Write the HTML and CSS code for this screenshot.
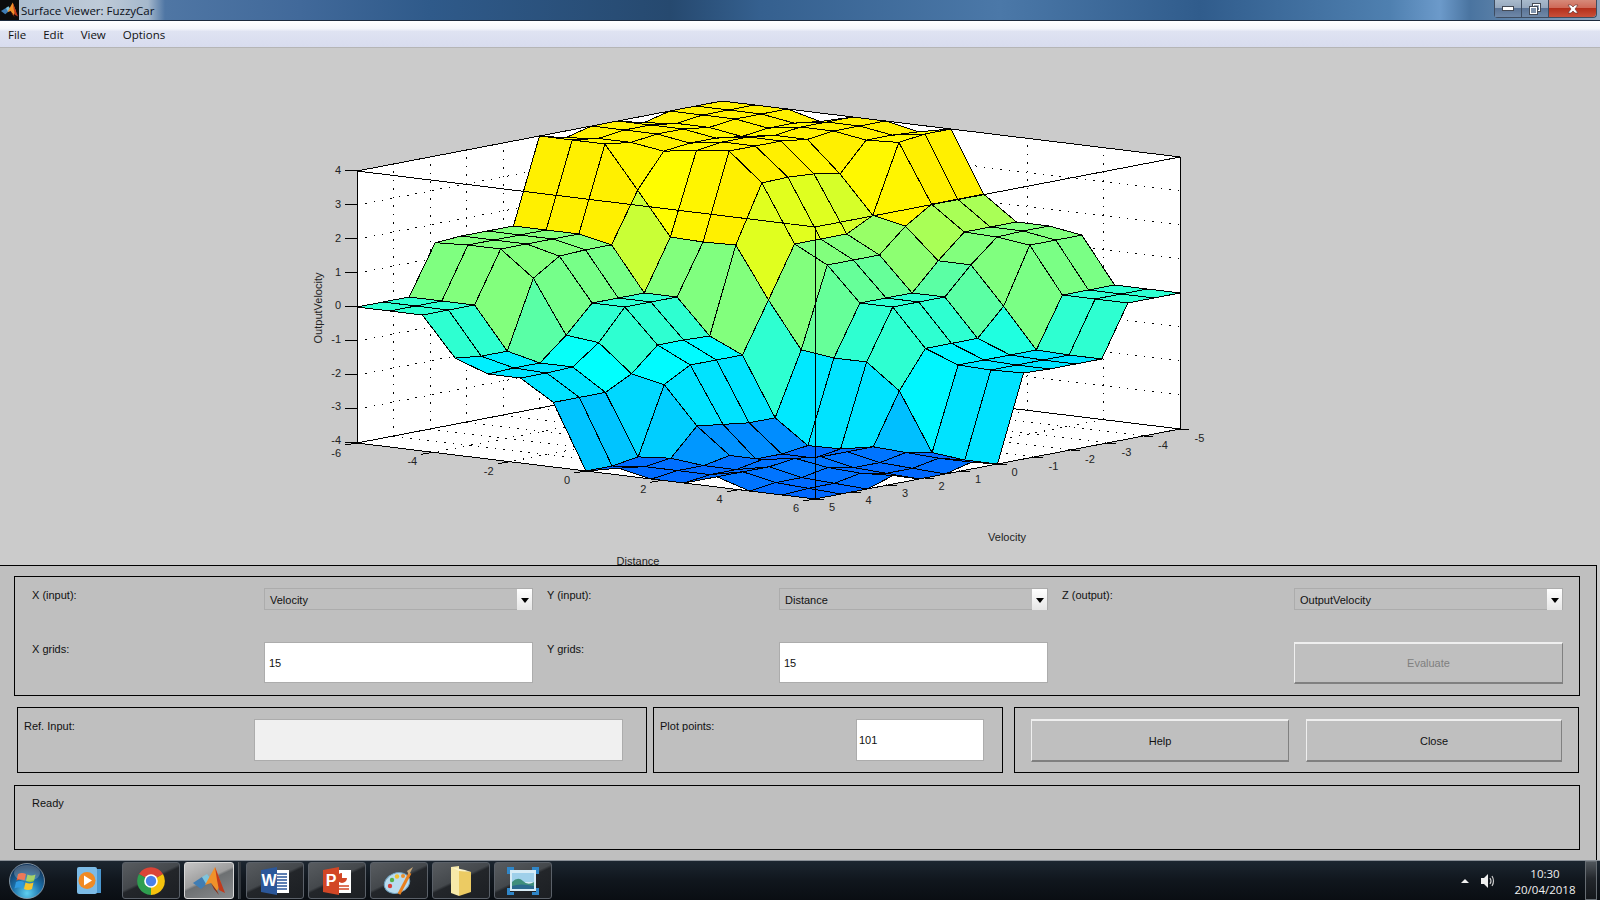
FILE: index.html
```html
<!DOCTYPE html>
<html>
<head>
    <title>Surface Viewer: FuzzyCar</title>
    <link rel="stylesheet" href="styles.css">
</head>
<body>
    <svg class="defs" width="0" height="0">
        <symbol id="matlab-logo" viewBox="0 0 32 30">
            <polygon points="0,17 9,11 15,17 8,23" fill="#3f7db4"/>
            <polygon points="9,11 14,8 18,13 13,18" fill="#7fc4dc"/>
            <polygon points="12,19 22,1 28,17 24,25 18,17" fill="#f0922a"/>
            <polygon points="22,1 32,27 26,24 24,14" fill="#c23a1c"/>
            <polygon points="18,17 24,25 26,29 21,23" fill="#8c2a10"/>
        </symbol>
    </svg>

    <div class="titlebar">
        <div class="title-icon"><svg width="17" height="16"><use href="#matlab-logo"/></svg></div>
        <span class="title-text">Surface Viewer: FuzzyCar</span>
        <div class="win-buttons">
            <div class="win-btn">
                <svg width="12" height="6"><rect x="0.5" y="0.5" width="11" height="4" fill="#fff" stroke="#444a55"/></svg>
            </div>
            <div class="win-btn">
                <svg width="12" height="12">
                    <rect x="3.5" y="0.5" width="8" height="8" fill="none" stroke="#444a55"/>
                    <rect x="4.5" y="1.5" width="6" height="6" fill="none" stroke="#fff"/>
                    <rect x="0.5" y="3.5" width="8" height="8" fill="#7f93ad" stroke="#444a55"/>
                    <rect x="1.5" y="4.5" width="6" height="6" fill="none" stroke="#fff"/>
                </svg>
            </div>
            <div class="win-btn win-close">
                <svg width="12" height="10"><path d="M1 1h3l2 2 2-2h3L8 5l3 4H8L6 7 4 9H1l3-4z" fill="#fff" stroke="#5a2a2a" stroke-width="0.6"/></svg>
            </div>
        </div>
    </div>

    <div class="menubar">
        <span class="menu-item">File</span>
        <span class="menu-item">Edit</span>
        <span class="menu-item">View</span>
        <span class="menu-item">Options</span>
    </div>

    <div class="plot">
        <svg id="surface" width="1600" height="517" viewBox="0 48 1600 517" shape-rendering="crispEdges"></svg>
    </div>

    <div class="panel">
        <div class="box box-axes">
            <span class="lbl">X (input):</span>
            <div class="select"><span>Velocity</span><i class="arrow"></i></div>
            <span class="lbl">Y (input):</span>
            <div class="select"><span>Distance</span><i class="arrow"></i></div>
            <span class="lbl">Z (output):</span>
            <div class="select"><span>OutputVelocity</span><i class="arrow"></i></div>

            <span class="lbl">X grids:</span>
            <div class="edit">15</div>
            <span class="lbl">Y grids:</span>
            <div class="edit">15</div>
            <span class="lbl"></span>
            <button class="btn btn-disabled">Evaluate</button>
        </div>

        <div class="row-mid">
            <div class="box box-ref">
                <span class="lbl">Ref. Input:</span>
                <div class="edit edit-off"></div>
            </div>
            <div class="box box-points">
                <span class="lbl">Plot points:</span>
                <div class="edit edit-tight">101</div>
            </div>
            <div class="box box-actions">
                <button class="btn btn-help">Help</button>
                <button class="btn btn-close">Close</button>
            </div>
        </div>

        <div class="box box-status">
            <span class="lbl">Ready</span>
        </div>
    </div>

    <div class="taskbar">
        <div class="orb">
            <svg width="36" height="36" viewBox="0 0 36 36">
                <defs>
                    <radialGradient id="orb-fill" cx="50%" cy="85%" r="75%">
                        <stop offset="0" stop-color="#5fd0f0"/>
                        <stop offset="0.55" stop-color="#1b6fa8"/>
                        <stop offset="1" stop-color="#12365c"/>
                    </radialGradient>
                </defs>
                <circle cx="18" cy="18" r="17.5" fill="url(#orb-fill)" stroke="#9aa8b4" stroke-width="0.8"/>
                <path d="M9 11q4-2 8 0l-1.500 6.500q-4-2-8 0z" fill="#e8542a"/>
                <path d="M18.500 11.500q4 2 8 0l-1.500 6.500q-4 2-8 0z" fill="#8cc63f"/>
                <path d="M7 19q4-2 8 0l-1.500 6.500q-4-2-8 0z" fill="#2f9ae0"/>
                <path d="M16.500 19.500q4 2 8 0l-1.500 6.500q-4 2-8 0z" fill="#f7c52b"/>
                <ellipse cx="18" cy="10" rx="13" ry="8" fill="#fff" opacity="0.22"/>
            </svg>
        </div>

        <div class="task task-plain">
            <svg width="26" height="30" viewBox="0 0 26 30">
                <rect x="6" y="3" width="19" height="24" fill="#4a97cf"/>
                <rect x="1" y="1" width="20" height="27" rx="2" fill="#7cbbe6"/>
                <circle cx="11" cy="14.500" r="8.500" fill="#f08a24"/>
                <polygon points="8,9.500 16,14.500 8,19.500" fill="#fff"/>
            </svg>
        </div>

        <div class="task">
            <svg width="30" height="30" viewBox="0 0 30 30">
                <path d="M15 15L3 8A14 14 0 0 1 27 8z" fill="#db4437"/>
                <path d="M15 15L27 8A14 14 0 0 1 15 29z" fill="#f4c20d"/>
                <path d="M15 15L15 29A14 14 0 0 1 3 8z" fill="#2e9e4f"/>
                <circle cx="15" cy="15" r="6.800" fill="#fff"/>
                <circle cx="15" cy="15" r="5.200" fill="#4a80e8"/>
            </svg>
        </div>

        <div class="task task-active">
            <svg width="32" height="30"><use href="#matlab-logo"/></svg>
        </div>

        <div class="task-sep"></div>

        <div class="task">
            <svg width="30" height="30" viewBox="0 0 30 30">
                <rect x="12" y="4" width="17" height="23" fill="#fff"/>
                <path d="M16 8h11M16 11h11M16 14h11M16 17h11M16 20h11M16 23h11" stroke="#2b579a" stroke-width="1.500"/>
                <polygon points="1,4 17,1 17,29 1,26" fill="#2b579a"/>
                <text x="9" y="20" class="app-letter" text-anchor="middle">W</text>
            </svg>
        </div>

        <div class="task">
            <svg width="30" height="30" viewBox="0 0 30 30">
                <rect x="12" y="4" width="17" height="23" fill="#fff"/>
                <path d="M20 7a5 5 0 1 0 5 5h-5z" fill="#d24726"/>
                <path d="M17 20h10M17 23h10" stroke="#d24726" stroke-width="1.500"/>
                <polygon points="1,4 17,1 17,29 1,26" fill="#d24726"/>
                <text x="9" y="20" class="app-letter" text-anchor="middle">P</text>
            </svg>
        </div>

        <div class="task">
            <svg width="32" height="32" viewBox="0 0 32 32">
                <ellipse cx="14" cy="18" rx="13" ry="10" transform="rotate(-20 14 18)" fill="#b9dcef" stroke="#6f9fbc"/>
                <circle cx="7" cy="21" r="2.200" fill="#d8403a"/>
                <circle cx="9" cy="15" r="2.200" fill="#55b04a"/>
                <circle cx="14" cy="11.500" r="2.200" fill="#f0c030"/>
                <circle cx="20" cy="11" r="2" fill="#e89030"/>
                <path d="M16 29L27 8" stroke="#e8801e" stroke-width="3"/>
                <path d="M26 10L30 2l-6 4z" fill="#c8a878"/>
            </svg>
        </div>

        <div class="task">
            <svg width="24" height="34" viewBox="0 0 24 34">
                <path d="M2 3l8-1v30l-8-3z" fill="#f7e9a8"/>
                <path d="M10 6l12 2v20l-12 4z" fill="#eccb63"/>
                <path d="M2 3l14 3 6 2-12-1z" fill="#fbf3c8"/>
            </svg>
        </div>

        <div class="task">
            <svg width="32" height="28" viewBox="0 0 32 28">
                <rect x="3" y="3" width="26" height="21" fill="#d8ecf6"/>
                <rect x="5" y="6" width="22" height="9" fill="#9fd0ea"/>
                <path d="M5 15q6-6 11-1t11 1v7H5z" fill="#3f8f7c"/>
                <path d="M5 19q8-3 22 0v3H5z" fill="#2b6a8e"/>
                <path d="M0 0h7v3H3v4H0zM25 0h7v7h-3V3h-4zM0 21h3v4h4v3H0zM29 21h3v7h-7v-3h4z" fill="#2f86c8"/>
            </svg>
        </div>

        <div class="tray">
            <i class="tray-arrow"></i>
            <svg class="tray-sound" width="16" height="16" viewBox="0 0 16 16">
                <path d="M1 5h3l4-4v14l-4-4H1z" fill="#f0f0f0"/>
                <path d="M10 5q2 3 0 6M12 3q3 5 0 10" fill="none" stroke="#c8c8c8" stroke-width="1.200"/>
            </svg>
            <div class="clock">
                <span>10:30</span>
                <span>20/04/2018</span>
            </div>
            <div class="show-desktop"></div>
        </div>
    </div>

    <script src="script.js"></script>
</body>
</html>
```

FILE: styles.css
```css
body {
    margin: 0;
    width: 1600px;
    height: 900px;
    overflow: hidden;
    background-color: #cbcbcb;
    font-family: "Liberation Sans", Arial, sans-serif;
    font-size: 11px;
    color: #111;
}

.defs {
    position: absolute;
}

.titlebar {
    display: flex;
    align-items: center;
    height: 20px;
    border-bottom: 1px solid #1c2a3c;
    background: linear-gradient(90deg, #a9bccf 0, #bfcbd8 100px, #a5b8cc 148px, #4f76a4 165px, #41699a 300px, #2f5a8a 430px, #26496f 670px, #35608f 760px, #4b78a8 1000px, #305c8c 1200px, #4f80b0 1390px, #6c9aca 1440px, #4a74a0 1470px, #8ea6c0 1600px);
}

.title-icon {
    display: flex;
    align-items: center;
    justify-content: center;
    width: 19px;
    height: 20px;
    background-color: #0c0c0c;
}

.title-text {
    margin-left: 2px;
    font-family: "Open Sans", sans-serif;
    font-size: 11.5px;
    color: #0a0f18;
}

.win-buttons {
    display: flex;
    align-self: flex-start;
    height: 17px;
    margin-left: auto;
    margin-right: 3px;
    border: 1px solid #3e4c60;
    border-top: 0;
    border-radius: 0 0 4px 4px;
}

.win-btn {
    display: flex;
    align-items: center;
    justify-content: center;
    box-sizing: border-box;
    width: 27px;
    background: linear-gradient(#a9bacc 0, #96a8be 45%, #5b7496 50%, #6f88a8 100%);
    border-right: 1px solid #3e4c60;
}

.win-close {
    width: 47px;
    border-right: 0;
    background: linear-gradient(#d68a7a 0, #cf6a58 45%, #b4301c 50%, #c9503a 100%);
    border-radius: 0 0 4px 0;
}

.menubar {
    display: flex;
    align-items: center;
    height: 25px;
    padding-top: 1px;
    border-bottom: 1px solid #b5b5b5;
    background: linear-gradient(#ffffff 0, #f4f6fb 30%, #dfe3f2 40%, #d8dcee 100%);
}

.menu-item {
    margin-left: 8px;
    margin-right: 9px;
    font-family: "Open Sans", sans-serif;
    font-size: 11.5px;
    color: #111;
}

.plot {
    height: 517px;
    background-color: #cbcbcb;
}

#surface {
    display: block;
}

#surface text {
    font-family: "Liberation Sans", Arial, sans-serif;
    font-size: 11px;
    fill: #222;
}

.panel {
    box-sizing: border-box;
    height: 295px;
    width: 1597px;
    padding-top: 10px;
    border-top: 1px solid #000;
    border-right: 1px solid #000;
    background-color: #bfbfbf;
}

.box {
    box-sizing: border-box;
    border: 1px solid #000;
}

.box-axes {
    display: grid;
    grid-template-columns: 218px 269px 218px 269px 218px 269px;
    grid-template-rows: 22px 41px;
    column-gap: 14px;
    row-gap: 32px;
    width: 1566px;
    height: 120px;
    margin-left: 14px;
    padding: 11px 0 0 17px;
}

.lbl {
    line-height: 14px;
}

.select {
    display: flex;
    align-items: center;
    justify-content: space-between;
    box-sizing: border-box;
    padding-left: 5px;
    padding-top: 2px;
    border: 1px solid #acacac;
    background-color: #bfbfbf;
}

.arrow {
    position: relative;
    width: 15px;
    height: 21px;
    margin-top: -2px;
    background: linear-gradient(#ffffff 0, #e6e6e6 100%);
}

.arrow::after {
    content: "";
    position: absolute;
    left: 4px;
    top: 9px;
    border-left: 4px solid transparent;
    border-right: 4px solid transparent;
    border-top: 5px solid #000;
}

.edit {
    display: flex;
    align-items: center;
    box-sizing: border-box;
    padding-left: 4px;
    border: 1px solid #acacac;
    background-color: #fff;
}

.edit-off {
    background-color: #f0f0f0;
}

.edit-tight {
    padding-left: 2px;
}

.btn {
    box-sizing: border-box;
    height: 43px;
    padding: 0;
    border-style: solid;
    border-width: 2px 1px 2px 1px;
    border-color: #efefef #808080 #808080 #efefef;
    background-color: #bfbfbf;
    font-family: "Liberation Sans", Arial, sans-serif;
    font-size: 11px;
    color: #111;
}

.btn-disabled {
    height: 42px;
    color: #808080;
}

.row-mid {
    display: flex;
    height: 66px;
    margin: 11px 0 12px 17px;
}

.box-ref {
    display: grid;
    grid-template-columns: 230px 369px;
    grid-template-rows: 42px;
    column-gap: 0;
    width: 630px;
    margin-right: 6px;
    padding: 11px 0 0 6px;
}

.box-points {
    display: grid;
    grid-template-columns: 196px 128px;
    grid-template-rows: 42px;
    width: 350px;
    margin-right: 11px;
    padding: 11px 0 0 6px;
}

.box-actions {
    display: flex;
    gap: 17px;
    width: 565px;
    padding: 11px 0 0 16px;
}

.btn-help {
    width: 258px;
}

.btn-close {
    width: 256px;
}

.box-status {
    width: 1566px;
    height: 65px;
    margin-left: 14px;
    padding: 10px 0 0 17px;
}

.taskbar {
    display: flex;
    box-sizing: border-box;
    height: 40px;
    padding-top: 1px;
    border-top: 1px solid #8a9097;
    background: linear-gradient(#1c2630 0, #10161d 50%, #0a0e13 100%);
}

.orb {
    display: flex;
    align-items: center;
    width: 59px;
    padding-left: 9px;
    box-sizing: border-box;
}

.task {
    display: flex;
    align-items: center;
    justify-content: center;
    box-sizing: border-box;
    width: 58px;
    height: 37px;
    margin-right: 4px;
    border: 1px solid #5a6068;
    border-radius: 3px;
    background: linear-gradient(155deg, #585c60 0, #44484c 45%, #23262a 50%, #1c1f23 100%);
}

.task-plain {
    width: 59px;
    margin-right: 4px;
    border: 0;
    background: none;
}

.task-active {
    width: 50px;
    border-color: #d8d8d8;
    background: linear-gradient(155deg, #c6c6c6 0, #9e9e9e 45%, #6d7072 50%, #8a8c8e 100%);
}

.task-sep {
    width: 2px;
    height: 37px;
    margin-right: 5px;
    background-color: #30353b;
    border-left: 1px solid #50565c;
}

.tray {
    display: flex;
    align-items: center;
    margin-left: auto;
    height: 38px;
    color: #f0f0f0;
}

.tray-arrow {
    width: 0;
    height: 0;
    margin-right: 11px;
    border-left: 4px solid transparent;
    border-right: 4px solid transparent;
    border-bottom: 4px solid #f0f0f0;
}

.tray-sound {
    margin-right: 14px;
}

.clock {
    display: flex;
    flex-direction: column;
    align-items: center;
    gap: 1px;
    width: 70px;
    margin-right: 5px;
    font-family: "Open Sans", sans-serif;
    font-size: 11.5px;
    line-height: 15px;
}

.show-desktop {
    width: 12px;
    height: 39px;
    margin-right: 3px;
    margin-top: -1px;
    border: 1px solid #666c72;
    box-sizing: border-box;
    background: linear-gradient(#50565c 0, #23272c 45%, #14171b 100%);
}

.app-letter {
    font-family: "Liberation Sans", Arial, sans-serif;
    font-size: 16px;
    font-weight: bold;
    fill: #fff;
}
```

FILE: script.js
```js
// FuzzyCar surface, 15 x 15 grid. Rows go with distance, columns with velocity (5 down to -5).
var Z = [
    [0, 0, 0, 1.45, 1.5, 1.5, 1.5, 4, 3.8, 4, 4, 3.8, 4, 4, 4],
    [0, 0, 0, 1.5, 1.5, 1.5, 1.5, 4, 3.9, 4, 4, 3.9, 4, 4, 4],
    [0, 0, 0, 1.5, 1.5, 1.5, 1.5, 4, 3.9, 4, 4, 3.9, 4, 4, 4],
    [-1.15, -1.24, -1.24, 0.76, 1.26, 1.3, 1.3, 2.76, 3.76, 3.85, 3.85, 3.75, 3.85, 3.85, 3.75],
    [-1.5, -1.47, -1.47, -0.8, 0, 0, 0, 1.5, 3.9, 4, 4, 3.9, 4, 4, 4],
    [-1.5, -1.5, -1.47, -0.9, 0, 0, 0, 1.47, 4, 4, 4, 3.9, 4, 4, 4],
    [-2.1, -2.1, -2.1, -1.7, -1, -1, -1.03, 1.5, 3.18, 3.2, 3.15, 3, 3.85, 3.85, 3.8],
    [-4, -4, -3.88, -1.9, -1.47, -1.47, -1.47, 0, 1.5, 1.5, 1.5, 1.9, 3.9, 4, 4],
    [-3.8, -3.9, -3.8, -3, -3.1, -3.2, -3.2, -1.35, 1, 1, 1, 1.7, 2.2, 2.2, 2.2],
    [-4, -3.9, -3.9, -3.75, -4, -4, -3.9, -1.47, 0, 0, 0, 0.8, 1.5, 1.5, 1.5],
    [-4, -3.9, -3.9, -3.75, -4, -4, -3.88, -1.47, 0, 0, 0, 0.8, 1.47, 1.5, 1.5],
    [-3.7, -3.7, -3.7, -3.6, -3.7, -3.7, -3.7, -2.2, -1.1, -1.1, -1.1, -0.3, 1.35, 1.35, 1.35],
    [-4, -3.9, -3.9, -3.75, -3.9, -3.9, -3.75, -3.9, -1.47, -1.47, -1.47, -1.47, 0, 0, 0],
    [-4, -3.95, -3.95, -3.8, -3.95, -3.95, -3.8, -4, -1.5, -1.5, -1.5, -1.5, 0, 0, 0],
    [-4, -4, -4, -3.75, -4, -4, -3.8, -4, -1.47, -1.5, -1.5, -1.5, 0, 0, 0]
];

var svg = document.getElementById('surface');

// axes box corners on screen
var LEFT = [357, 443];
var FRONT = [815, 499];
var RIGHT = [1180, 429];
var HEIGHT = 272;

function project(d, v, z) {
    var a = (d + 6) / 12;
    var b = (5 - v) / 10;
    var x = LEFT[0] + a * (FRONT[0] - LEFT[0]) + b * (RIGHT[0] - FRONT[0]);
    var y = LEFT[1] + a * (FRONT[1] - LEFT[1]) + b * (RIGHT[1] - FRONT[1]);
    return [x, y - (z + 4) / 8 * HEIGHT];
}

function gridPoint(i, j) {
    return project(-6 + i * 12 / 14, 5 - j * 10 / 14, Z[i][j]);
}

function jet(t) {
    function clamp(c) {
        return Math.round(Math.max(0, Math.min(1, c)) * 255);
    }
    var r = Math.min((t - 0.375) * 4, (1.125 - t) * 4);
    var g = Math.min((t - 0.125) * 4, (0.875 - t) * 4);
    var b = Math.min((t + 0.125) * 4, (0.625 - t) * 4);
    return 'rgb(' + clamp(r) + ',' + clamp(g) + ',' + clamp(b) + ')';
}

function colorFor(z) {
    return jet(z < 0 ? 0.42 + 0.049 * z : 0.42 + 0.055 * z);
}

function add(tag, attrs, text) {
    var el = document.createElementNS('http://www.w3.org/2000/svg', tag);
    for (var k in attrs) {
        el.setAttribute(k, attrs[k]);
    }
    if (text !== undefined) {
        el.textContent = text;
    }
    svg.appendChild(el);
    return el;
}

function line(p, q, extra) {
    var attrs = { x1: p[0], y1: p[1], x2: q[0], y2: q[1], stroke: '#000', 'stroke-width': 1 };
    for (var k in extra) {
        attrs[k] = extra[k];
    }
    add('line', attrs);
}

function pointsOf(list) {
    return list.map(function (p) { return p[0] + ',' + p[1]; }).join(' ');
}

var dotted = { 'stroke-dasharray': '1.5 7' };

function drawWalls() {
    add('polygon', {
        fill: '#fff',
        points: pointsOf([project(-6, 5, 4), project(-6, -5, 4), project(6, -5, 4), project(6, -5, -4), project(6, 5, -4), project(-6, 5, -4)])
    });

    var n;
    for (n = -4; n <= 4; n++) {
        line(project(-6, 5, n), project(-6, -5, n), dotted);
        line(project(-6, -5, n), project(6, -5, n), dotted);
    }
    for (n = -4; n <= 4; n++) {
        line(project(-6, n, -4), project(-6, n, 4), dotted);
        line(project(-6, n, -4), project(6, n, -4), dotted);
    }
    for (n = -4; n <= 4; n += 2) {
        line(project(n, -5, -4), project(n, -5, 4), dotted);
        line(project(n, -5, -4), project(n, 5, -4), dotted);
    }

    // back edges of the box
    line(project(-6, 5, 4), project(-6, -5, 4));
    line(project(-6, -5, 4), project(6, -5, 4));
    line(project(-6, 5, -4), project(-6, -5, -4));
    line(project(-6, -5, -4), project(6, -5, -4));
    line(project(-6, -5, -4), project(-6, -5, 4));
    line(project(-6, 5, -4), project(-6, 5, 4));
    line(project(6, -5, -4), project(6, -5, 4));
    line(project(-6, 5, -4), project(6, 5, -4));
    line(project(6, 5, -4), project(6, -5, -4));
}

function drawMesh() {
    // back corner first, so nearer cells paint over farther ones
    for (var i = 0; i < 14; i++) {
        for (var j = 13; j >= 0; j--) {
            add('polygon', {
                points: pointsOf([gridPoint(i, j), gridPoint(i + 1, j), gridPoint(i + 1, j + 1), gridPoint(i, j + 1)]),
                fill: colorFor(Z[i][j + 1]),
                stroke: '#000',
                'stroke-width': 1
            });
        }
    }
}

function label(x, y, text, anchor) {
    add('text', { x: x, y: y, 'text-anchor': anchor || 'middle', 'shape-rendering': 'auto' }, text);
}

function drawFrontAndTicks() {
    // these edges of the box lie over the surface
    line(project(-6, 5, 4), project(6, 5, 4));
    line(project(6, 5, 4), project(6, -5, 4));
    line(project(6, 5, -4), project(6, 5, 4));

    var n, p;
    for (n = -4; n <= 4; n++) {
        p = project(-6, 5, n);
        line(p, [p[0] - 12, p[1] - 1]);
        label(p[0] - 16, p[1] + 3.4 - (4 - n) * 0.3, String(n), 'end');
    }
    for (n = -6; n <= 6; n += 2) {
        p = project(n, 5, -4);
        line(p, [p[0] - 12, p[1] + 2]);
        if (n === -6) {
            label(p[0] - 16, p[1] + 14, String(n), 'end');
        } else if (n < 0) {
            label(p[0] - 21, p[1] + 13, String(n));
        } else {
            label(p[0] - 19, p[1] + 13, String(n));
        }
    }
    for (n = -5; n <= 5; n++) {
        p = project(6, n, -4);
        line(p, [p[0] + 9, p[1] + 1]);
        if (n < 0) {
            label(p[0] + 19.5, p[1] + 13, String(n));
        } else {
            label(p[0] + 17, p[1] + 12, String(n));
        }
    }

    label(1007, 541, 'Velocity');
    label(638, 565, 'Distance');
    add('text', { x: 0, y: 0, 'text-anchor': 'middle', transform: 'translate(322 308) rotate(-90)' }, 'OutputVelocity');
}

drawWalls();
drawMesh();
drawFrontAndTicks();
```
